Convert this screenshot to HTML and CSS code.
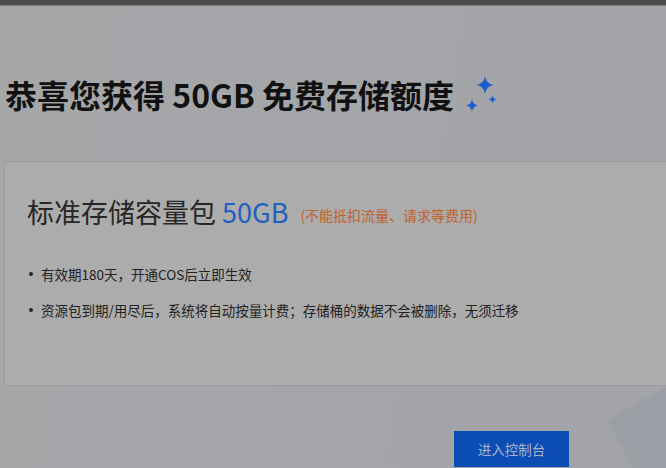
FILE: index.html
```html
<!DOCTYPE html>
<html lang="zh-CN">
<head>
<meta charset="utf-8">
<title>免费存储额度</title>
<link rel="stylesheet" href="styles.css">
</head>
<body>
<div class="topbar"></div>
<svg class="deco" width="666" height="468" viewBox="0 0 666 468"><polygon points="607,420 666,387 666,468 633,468" fill="#9c9ea5"/></svg>
<main class="page">
  <h1 class="headline">恭喜您获得 50GB 免费存储额度<svg class="sparkles" width="36" height="40" viewBox="0 0 36 40"><path fill="#1a5ed0" d="M21,2.5 Q22.3,9.7 29.5,11 Q22.3,12.3 21,19.5 Q19.7,12.3 12.5,11 Q19.7,9.7 21,2.5Z"/><path fill="#1a5ed0" d="M8,25.5 Q8.9,30.6 14,31.5 Q8.9,32.4 8,37.5 Q7.1,32.4 2,31.5 Q7.1,30.6 8,25.5Z"/><path fill="#1a5ed0" d="M28.5,21.5 Q29.1,24.9 32.5,25.5 Q29.1,26.1 28.5,29.5 Q27.9,26.1 24.5,25.5 Q27.9,24.9 28.5,21.5Z"/></svg></h1>
  <section class="card">
    <div class="card-title">标准存储容量包 <span class="amount">50GB</span><span class="note">(不能抵扣流量、请求等费用)</span></div>
    <ul class="points">
      <li>有效期180天，开通COS后立即生效</li>
      <li>资源包到期/用尽后，系统将自动按量计费；存储桶的数据不会被删除，无须迁移</li>
    </ul>
  </section>
  <div class="actions">
    <button class="btn">进入控制台</button>
  </div>
</main>
</body>
</html>
```
FILE: styles.css
```css
html, body {
  margin: 0;
  padding: 0;
  width: 666px;
  height: 468px;
  overflow: hidden;
}
body {
  background: linear-gradient(100deg, #a6a7a9 0%, #a4a5a8 50%, #a2a4a8 100%);
  font-family: "Noto Sans CJK SC", "Noto Sans", sans-serif;
  color: #222;
  position: relative;
}
.topbar {
  height: 5px;
  background: #4b4b4b;
  border-bottom: 1px solid #7c7c7d;
}
.deco {
  position: absolute;
  left: 0;
  top: 0;
}
.page {
  position: relative;
}
.headline {
  margin: 67px 0 0 5px;
  font-size: 32px;
  line-height: 40px;
  font-weight: 700;
  color: #111;
  white-space: nowrap;
  display: flex;
  align-items: center;
}
.sparkles {
  margin-left: 10px;
  margin-top: 1px;
  flex: none;
}
.card {
  margin: 47px 0 0 4px;
  width: 661px;
  height: 223px;
  background: #acacac;
  border: 1px solid #9a9a9f;
  border-right: none;
  padding: 0;
}
.card-title {
  margin: 32px 0 0 22px;
  font-size: 27px;
  line-height: 36px;
  color: #262626;
  white-space: nowrap;
}
.amount {
  color: #1f5fc0;
}
.note {
  margin-left: 12px;
  font-size: 14px;
  color: #c1622a;
  vertical-align: 2px;
}
.points {
  list-style: none;
  margin: 31px 0 0 0;
  padding: 0 0 0 24px;
}
.points li {
  display: flex;
  align-items: center;
  gap: 8px;
  font-size: 13.5px;
  line-height: 20px;
  color: #222;
  white-space: nowrap;
}
.points li + li {
  margin-top: 16px;
}
.points li::before {
  content: "";
  width: 4px;
  height: 4px;
  border-radius: 50%;
  background: #222;
  flex: none;
}
.actions {
  margin: 45px 0 0 454px;
}
.btn {
  width: 115px;
  height: 36px;
  border: 0;
  background: #0b4cb5;
  color: #aab4ca;
  font-family: "Noto Sans CJK SC", sans-serif;
  font-size: 13.5px;
  padding: 0;
}
```
